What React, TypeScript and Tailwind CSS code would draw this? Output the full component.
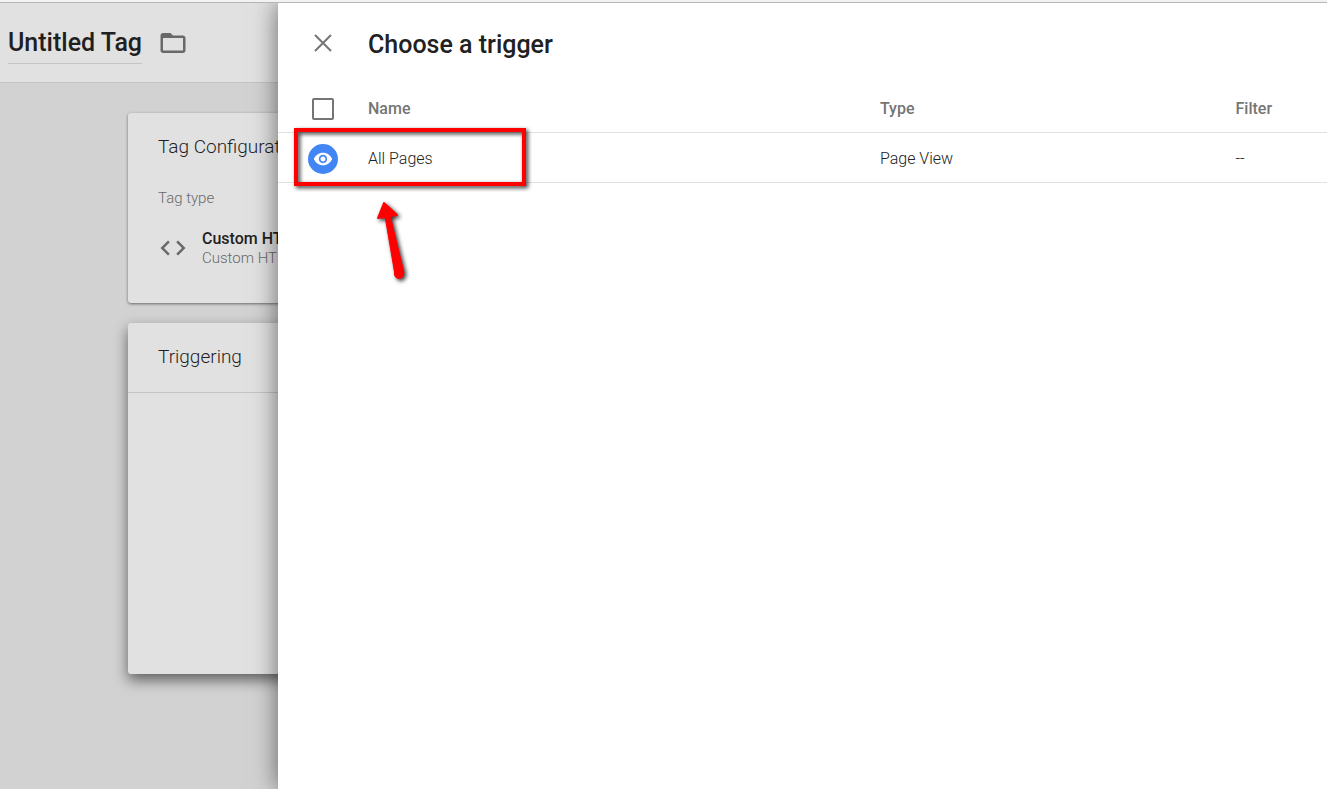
import React from 'react';
import { MdCode, MdFolderOpen, MdVisibility } from 'react-icons/md';

const triggers = [{ name: 'All Pages', type: 'Page View', filter: '--' }];

const TagEditor = () => (
  <section className="w-[278px] shrink-0 overflow-hidden whitespace-nowrap bg-[#d2d2d2]">
    <header className="flex h-20 items-center gap-4 border-b border-[#c4c4c4] bg-[#e1e1e1] pl-2">
      <h1 className="border-b border-[#c4c4c4] pt-1.5 pb-1 text-[25px] font-medium leading-8 text-[#1f1f1f]">
        Untitled Tag
      </h1>
      <button type="button" aria-label="Choose folder" className="text-[#696969]">
        <MdFolderOpen size={30} />
      </button>
    </header>

    <div className="ml-32 flex w-[800px] flex-col gap-5 pt-[30px]">
      <section className="h-[190px] rounded-[3px] bg-[#e1e1e1] px-[30px] pt-5 shadow-[0_1px_3px_rgba(0,0,0,0.5)]">
        <h2 className="text-[19px] font-light leading-7 text-[#1f1f1f]">Tag Configuration</h2>
        <p className="mt-[27px] text-[15px] font-light leading-5 text-[#696969]">Tag type</p>
        <div className="mt-5 flex items-center gap-3.5">
          <MdCode size={30} className="text-[#696969]" />
          <div>
            <div className="pt-px text-base font-medium leading-5 text-[#1f1f1f]">Custom HTML</div>
            <div className="text-[15px] font-light leading-[18px] text-[#696969]">Custom HTML Tag</div>
          </div>
        </div>
      </section>

      <section className="h-[351px] rounded-[3px] bg-[#e1e1e1] shadow-[0_6px_14px_rgba(0,0,0,0.55)]">
        <h2 className="border-b border-[#c4c4c4] px-[30px] pt-5 pb-[21px] text-[19px] font-light leading-7 text-[#1f1f1f]">
          Triggering
        </h2>
      </section>
    </div>
  </section>
);

const Arrow = () => (
  <svg
    width="40"
    height="90"
    viewBox="0 0 40 90"
    aria-hidden="true"
    className="pointer-events-none absolute top-[63px] left-[74px]"
  >
    <g fill="#ff0000" stroke="#ff0000" strokeLinejoin="round" strokeLinecap="round">
      <path d="M12 8 L6 23 L25 20 Z" strokeWidth="2" />
      <path d="M13 21 L23 80 L32 78 L18 20 Z" strokeWidth="1" />
      <circle cx="27" cy="79" r="4.500" strokeWidth="1" />
    </g>
  </svg>
);

const TriggerPicker = () => (
  <main className="z-10 min-w-0 flex-1 bg-white shadow-[0_0_24px_rgba(0,0,0,0.55)]">
    <header className="flex h-20 items-center">
      <div className="flex w-[90px] justify-center">
        <button type="button" aria-label="Close" className="text-[#757575]">
          <svg width="18" height="18" viewBox="0 0 18 18" fill="none" stroke="currentColor" strokeWidth="2">
            <path d="M1 1L17 17M17 1L1 17" />
          </svg>
        </button>
      </div>
      <h2 className="pt-1 text-[25px] font-medium leading-8 text-[#212121]">Choose a trigger</h2>
    </header>

    <div className="relative">
      <table className="w-full table-fixed border-collapse text-left">
        <thead>
          <tr className="h-[49px] border-b border-[#e0e0e0] text-base font-medium text-[#757575]">
            <th className="w-[90px]">
              <input
                type="checkbox"
                aria-label="Select all triggers"
                className="mx-auto mt-[3px] block size-[22px] appearance-none rounded-xs border-2 border-[#757575]"
              />
            </th>
            <th className="w-[48.8%] pt-1 font-medium">Name</th>
            <th className="w-[33.9%] pt-1 font-medium">Type</th>
            <th className="pt-1 font-medium">Filter</th>
          </tr>
        </thead>
        <tbody>
          {triggers.map((trigger) => (
            <tr key={trigger.name} className="h-[50px] border-b border-[#e0e0e0] text-base font-light text-[#212121]">
              <td>
                <span className="mx-auto mt-1 flex size-[30px] items-center justify-center rounded-full bg-[#4285f4] text-white">
                  <MdVisibility size={20} />
                </span>
              </td>
              <td className="pt-1">{trigger.name}</td>
              <td className="pt-1">{trigger.type}</td>
              <td className="pt-1">{trigger.filter}</td>
            </tr>
          ))}
        </tbody>
      </table>

      <div className="pointer-events-none absolute top-[45px] left-4 h-[58px] w-[232px] border-4 border-[#ff0000] drop-shadow-[2px_2px_2px_rgba(0,0,0,0.8)]">
        <Arrow />
      </div>
    </div>
  </main>
);

const App = () => (
  <div className="flex min-h-screen flex-col font-[Roboto,sans-serif]">
    <div className="z-20 h-[3px] border-b border-[#b5b5b5] bg-[#f2f2f2]" />
    <div className="flex flex-1">
      <TagEditor />
      <TriggerPicker />
    </div>
  </div>
);

export default App;
